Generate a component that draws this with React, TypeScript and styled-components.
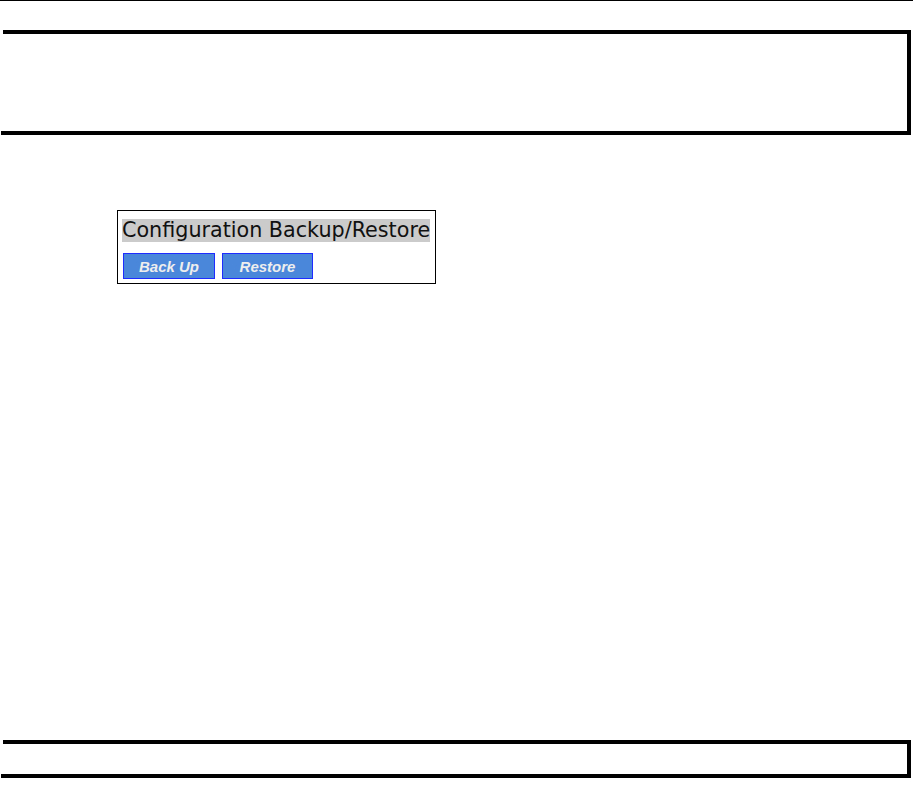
import React from 'react'
import styled, {createGlobalStyle} from "styled-components";

const GlobalStyle = createGlobalStyle`
  html, body {
    margin: 0;
    padding: 0;
    background: #ffffff;
  }
  body {
    font-family: "DejaVu Sans", Verdana, sans-serif;
  }
`

const Page = styled.div`
  width: 913px;
  height: 805px;
  display: flex;
  flex-direction: column;
  overflow: hidden;
`
const TopRule = styled.div`
  height: 1px;
  background: #000000;
`
const Frame = styled.div<{ $top: number, $height: number }>`
  margin-top: ${p => p.$top}px;
  margin-left: 3px;
  width: 904px;
  height: ${p => p.$height}px;
  border-top: 4px solid #000;
  border-right: 4px solid #000;
  border-bottom: 4px solid #000;
  position: relative;

  &::after {
    content: "";
    position: absolute;
    left: -2px;
    bottom: -4px;
    width: 2px;
    height: 4px;
    background: #000;
  }
`
const Panel = styled.div`
  margin-top: 75px;
  margin-left: 117px;
  width: 313px;
  border: 1px solid #000;
  padding: 8px 0 4px 4px;
  display: flex;
  flex-direction: column;
  align-items: flex-start;
  gap: 11px;
`
const Title = styled.div`
  background: #cbcbcb;
  color: #111;
  font-size: 20.7px;
  line-height: 23px;
  height: 23px;
  white-space: nowrap;
`
const ButtonRow = styled.div`
  display: flex;
  gap: 7px;
  padding-left: 1px;
`
const Button = styled.button<{ $width: number }>`
  width: ${p => p.$width}px;
  height: 26px;
  margin: 0;
  padding: 0;
  border: 1px solid #1f2cff;
  background: #4a86d9;
  color: #eeeeee;
  font-family: "Liberation Sans", Arial, sans-serif;
  font-weight: bold;
  font-style: italic;
  font-size: 15px;
  cursor: pointer;
`

const App = () => {
    return (
        <Page>
            <GlobalStyle/>
            <TopRule/>
            <Frame $top={29} $height={97}/>
            <Panel>
                <Title>Configuration Backup/Restore</Title>
                <ButtonRow>
                    <Button $width={92}>Back Up</Button>
                    <Button $width={91}>Restore</Button>
                </ButtonRow>
            </Panel>
            <Frame $top={456} $height={30}/>
        </Page>
    )
}

export default App
